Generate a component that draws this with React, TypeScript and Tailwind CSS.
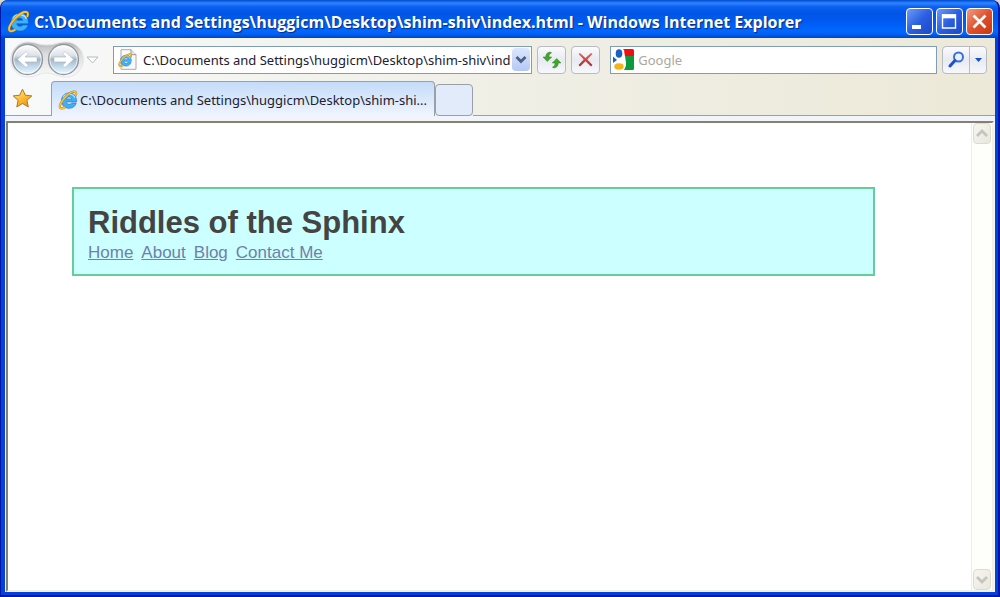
import React from 'react';

const PATH = 'C:\\Documents and Settings\\huggicm\\Desktop\\shim-shiv\\index.html';
const TAB_LABEL = 'C:\\Documents and Settings\\huggicm\\Desktop\\shim-shi...';

const links = ['Home', 'About', 'Blog', 'Contact Me'];

const App: React.FC = () => {
  return (
    <div className="h-screen flex flex-col overflow-hidden bg-[#d8d8c8] font-['Noto_Sans',sans-serif]">
      <div className="flex-1 min-h-0 flex flex-col rounded-t-lg bg-[#0540dc] border-l border-r-2 border-b-2 border-[#0018a8]">
        <TitleBar />
        <div className="flex-1 min-h-0 flex flex-col ml-1 mr-[3px] mb-[3px] bg-[#f4f5f6]">
          <div className="bg-gradient-to-r from-[#f8f9fa] via-[#f0efe6] to-[#ece9d8]">
            <Toolbar />
            <TabRow />
          </div>
          <div className="h-[5px] shrink-0 bg-[#f1f4fa]" />
          <Viewport />
        </div>
      </div>
    </div>
  );
};

const TitleBar = () => (
  <header className="h-[38px] shrink-0 flex items-center gap-1 pl-[6px] pr-[5px] pt-[5px] rounded-t-lg bg-[linear-gradient(180deg,#0048d0_0%,#2c86ff_8%,#0d5ff0_18%,#0055e5_35%,#005cf5_60%,#0068ff_82%,#0060f4_90%,#0044c0_100%)]">
    <IeLogo size={23} />
    <span className="flex-1 min-w-0 truncate font-['Open_Sans',sans-serif] text-[16px] leading-6 font-bold text-white [text-shadow:1px_1px_1px_#0a2a80]">
      {PATH} - Windows Internet Explorer
    </span>
    <div className="flex gap-[3px]">
      <button aria-label="Minimize" className="w-[27px] h-[27px] rounded border border-white bg-gradient-to-br from-[#6d9bf8] via-[#2b5ee0] to-[#1c48c8]">
        <svg viewBox="0 0 25 25" className="w-full h-full">
          <rect x="5" y="16" width="9" height="4" fill="#fff" />
        </svg>
      </button>
      <button aria-label="Maximize" className="w-[27px] h-[27px] rounded border border-white bg-gradient-to-br from-[#6d9bf8] via-[#2b5ee0] to-[#1c48c8]">
        <svg viewBox="0 0 25 25" className="w-full h-full">
          <path d="M5.500 6h13v13h-13z" fill="none" stroke="#fff" strokeWidth="1.400" />
          <path d="M5 5.300h14v4H5z" fill="#fff" />
        </svg>
      </button>
      <button aria-label="Close" className="w-[27px] h-[27px] rounded border border-white bg-gradient-to-br from-[#f09a80] via-[#e0502c] to-[#c83810]">
        <svg viewBox="0 0 25 25" className="w-full h-full">
          <path d="M6.500 6.500l12 12M18.500 6.500l-12 12" stroke="#fff" strokeWidth="2.700" />
        </svg>
      </button>
    </div>
  </header>
);

const Toolbar = () => (
  <div className="h-[43px] flex items-center pl-[5px] pr-2">
    <NavButtons />
    <div className="ml-[14px] h-7 flex-[419] min-w-0 flex items-center border border-[#7f9db9] bg-white pl-1 pr-px">
      <PageIcon />
      <input
        aria-label="Address"
        defaultValue={PATH}
        className="ml-[6px] min-w-0 flex-1 text-[13px] leading-5 text-[#202030] outline-none"
      />
      <button aria-label="Show address list" className="ml-px w-[18px] h-[23px] flex items-center justify-center rounded-sm bg-gradient-to-b from-[#dce7fd] to-[#b4c8f4]">
        <svg width="12" height="9" viewBox="0 0 12 9">
          <path d="M1.500 2L6 6.500 10.500 2" fill="none" stroke="#4a6184" strokeWidth="2.800" />
        </svg>
      </button>
    </div>
    <button aria-label="Refresh" className="ml-[5px] w-[29px] h-7 shrink-0 flex items-center justify-center rounded border border-[#b8bac4] bg-gradient-to-b from-[#fbfbfc] via-[#e8eaf2] to-[#f7f8fc]">
      <svg width="20" height="18" viewBox="0 0 20 18">
        <path d="M8.500 1C5.200 1.200 3.800 3 3.700 6H1l4.300 4.500L9.700 6H7C7 4 7.300 2.800 9.500 2z" fill="#43a52c" stroke="#28801c" strokeWidth=".5" />
        <path d="M11.500 17c3.300-.2 4.700-2 4.800-5H19l-4.300-4.500L10.300 12H13c0 2-.3 3.200-2.500 4z" fill="#43a52c" stroke="#28801c" strokeWidth=".5" />
      </svg>
    </button>
    <button aria-label="Stop" className="ml-[5px] w-[29px] h-7 shrink-0 flex items-center justify-center rounded border border-[#b8bac4] bg-gradient-to-b from-[#fbfbfc] via-[#e8eaf2] to-[#f7f8fc]">
      <svg width="15" height="15" viewBox="0 0 15 15">
        <defs>
          <linearGradient id="stop" x2="0" y2="1">
            <stop stopColor="#e8655a" />
            <stop offset="1" stopColor="#a82c30" />
          </linearGradient>
        </defs>
        <path d="M2 1l5.500 5L13 1l1.500 1-5.200 5.500 5.200 5.500-1.500 1.500L7.500 9.300 2 14.500.5 13l5.200-5.500L.5 2z" fill="url(#stop)" />
      </svg>
    </button>
    <div className="ml-[10px] h-7 flex-[328] min-w-0 flex items-center border border-[#7f9db9] bg-white pl-[2px]">
      <GoogleIcon />
      <input
        aria-label="Search"
        placeholder="Google"
        className="ml-1 min-w-0 flex-1 text-[13px] leading-5 placeholder:text-[#aca899] outline-none"
      />
    </div>
    <div className="ml-[5px] h-7 shrink-0 flex rounded border border-[#b8bac4] bg-gradient-to-b from-[#fbfbfc] via-[#e8eaf2] to-[#f7f8fc]">
      <button aria-label="Go" className="w-[27px] flex items-center justify-center border-r border-[#b8bac4]">
        <svg width="17" height="17" viewBox="0 0 17 17">
          <circle cx="10.500" cy="6" r="4.500" fill="#e8f2ff" stroke="#3b6fe0" strokeWidth="2" />
          <path d="M7 9.500L2 15" stroke="#1d4fd0" strokeWidth="3" strokeLinecap="round" />
        </svg>
      </button>
      <button aria-label="Search options" className="w-4 flex items-center justify-center">
        <svg width="7" height="4" viewBox="0 0 7 4">
          <path d="M0 0h7L3.500 4z" fill="#1250d0" />
        </svg>
      </button>
    </div>
  </div>
);

const TabRow = () => (
  <div className="h-[35px] flex items-end">
    <div className="w-[46px] h-[34px] flex items-center pl-[7px] border-b border-[#9a9fa8]">
      <button aria-label="Favorites">
        <svg width="21" height="21" viewBox="0 0 21 21">
          <defs>
            <linearGradient id="star" x1="0" y1="0" x2=".6" y2="1">
              <stop stopColor="#fff0a0" />
              <stop offset=".5" stopColor="#fcc440" />
              <stop offset="1" stopColor="#f09a18" />
            </linearGradient>
          </defs>
          <path d="M10.500 1.200l2.800 6 6.500.7-4.900 4.400 1.400 6.600-5.800-3.400-5.700 3.400 1.300-6.600L1.200 7.900l6.500-.7z" fill="url(#star)" stroke="#b87418" strokeLinejoin="round" />
        </svg>
      </button>
    </div>
    <button className="w-[384px] h-[35px] flex items-center gap-[2px] pl-[6px] pr-1 pt-[2px] rounded-t border border-b-0 border-[#9a9fa8] bg-gradient-to-b from-[#c4dbf8] to-[#eff5fe] text-left">
      <IeLogo size={20} />
      <span className="truncate text-[13px] leading-5 text-[#202030]">{TAB_LABEL}</span>
    </button>
    <button aria-label="New Tab" className="w-[38px] h-8 rounded border border-[#9a9fa8] bg-[#e1ebf9]" />
    <div className="flex-1 border-b border-[#9a9fa8]" />
  </div>
);

const Viewport = () => (
  <div className="flex-1 min-h-0 flex mx-px border-2 border-t-[#85816f] border-l-[#85816f] border-r-[#f4f1e2] border-b-[#f4f1e2] bg-white">
    <main className="flex-1 min-w-0 overflow-hidden font-['Liberation_Sans',sans-serif]">
      <section className="w-5/6 mt-16 ml-16 pt-4 px-[14px] pb-[9px] border-2 border-[#66cc99] bg-[#ccffff]">
        <h1 className="text-[31px] leading-9 font-bold text-[#444444]">Riddles of the Sphinx</h1>
        <nav className="flex gap-2 text-[17px] leading-6">
          {links.map((l) => (
            <a key={l} href="#" className="text-[#7080a8] underline">{l}</a>
          ))}
        </nav>
      </section>
    </main>
    <div className="w-[21px] flex flex-col justify-between border-l border-[#eeede5] bg-[#fefefb]">
      <ScrollButton label="Scroll up" d="M2 8l5-5 5 5" />
      <ScrollButton label="Scroll down" d="M2 3l5 5 5-5" />
    </div>
  </div>
);

const ScrollButton = ({ label, d }: { label: string; d: string }) => (
  <button aria-label={label} className="mx-px h-[21px] flex items-center justify-center rounded border border-[#dddbce] bg-gradient-to-br from-[#f6f5ef] to-[#e9e8df]">
    <svg width="14" height="11" viewBox="0 0 14 11">
      <path d={d} fill="none" stroke="#c6c5bc" strokeWidth="2.800" />
    </svg>
  </button>
);

const NavButtons = () => (
  <div className="flex items-center shrink-0">
    <div className="relative w-[74px] h-[37px]">
      <svg aria-hidden="true" className="absolute inset-0" width="74" height="37" viewBox="0 0 74 37">
        <defs>
          <linearGradient id="cradle" x2="0" y2="1">
            <stop stopColor="#b4b5b7" />
            <stop offset=".35" stopColor="#dcdddd" />
            <stop offset="1" stopColor="#fafafa" />
          </linearGradient>
          <linearGradient id="ball" x2="0" y2="1">
            <stop stopColor="#ffffff" />
            <stop offset=".36" stopColor="#dde3e8" />
            <stop offset=".5" stopColor="#a3b6c6" />
            <stop offset=".75" stopColor="#c4dcee" />
            <stop offset="1" stopColor="#eaf8ff" />
          </linearGradient>
        </defs>
        <path d="M18 1c8 0 10 3 18.500 3S48 1 56 1a17.500 17.500 0 0 1 0 35c-8 0-12-4-19.500-4S26 36 18 36A17.500 17.500 0 0 1 18 1z" fill="url(#cradle)" stroke="#e6e7e8" />
        <circle cx="17.500" cy="18.500" r="15" fill="url(#ball)" stroke="#93989d" strokeWidth="1.300" />
        <circle cx="53.500" cy="18.500" r="15" fill="url(#ball)" stroke="#93989d" strokeWidth="1.300" />
        <circle cx="17.500" cy="18.500" r="13.700" fill="none" stroke="#fff" strokeOpacity=".7" />
        <circle cx="53.500" cy="18.500" r="13.700" fill="none" stroke="#fff" strokeOpacity=".7" />
        <path d="M7.500 18.500l8.500-8 2.300 2.300-3.300 3.300h12v4.800H15l3.300 3.300-2.300 2.300z" fill="#fff" stroke="#a4b0ba" strokeWidth=".5" />
        <path d="M63.500 18.500l-8.500-8-2.300 2.300 3.300 3.300H44v4.800h12l-3.300 3.300 2.300 2.300z" fill="#fff" stroke="#a4b0ba" strokeWidth=".5" />
      </svg>
      <div className="relative flex h-full">
        <button aria-label="Back" className="flex-1 rounded-full" />
        <button aria-label="Forward" className="flex-1 rounded-full" />
      </div>
    </div>
    <button aria-label="Recent pages" className="ml-[2px] w-[13px]">
      <svg width="13" height="8" viewBox="0 0 13 8">
        <path d="M1 1h11L6.500 7z" fill="#fff" stroke="#b8babc" />
      </svg>
    </button>
  </div>
);

// blue "e" with the gold ring crossing it
const LogoShape = () => (
  <>
    <path d="M22.300 14.300H10.200c.2 1.700 1.600 2.700 3.400 2.700 1.400 0 2.400-.5 2.900-1.400h5.400c-1.200 4.200-4.300 6.400-8.500 6.400-5.600 0-9.300-3.600-9.300-9.100 0-5.600 3.800-9.400 9.400-9.400 5.700 0 9.100 3.900 8.800 10.800zM10.200 10.700h6.200c-.3-1.500-1.400-2.300-3-2.300-1.700 0-2.800.8-3.200 2.300z" fill="#3fb0f6" stroke="#1263b4" strokeWidth=".6" />
    <path d="M6.300 9c1-2.500 3.500-4 6.800-4 3.600 0 6.100 1.500 7.100 4.200" fill="none" stroke="#a9e2ff" strokeWidth="1.500" />
    <path d="M21.300 6.500c.8-2.300.6-3.800-.7-4.300-2.400-.9-7.600 1.800-12.200 6.700C3.300 14.300.9 19.800 2.800 21.600c1 .9 3 .5 5.400-.8" fill="none" stroke="#b47b10" strokeWidth="2.600" strokeLinecap="round" />
    <path d="M21.300 6.500c.8-2.300.6-3.800-.7-4.300-2.400-.9-7.600 1.800-12.200 6.700C3.300 14.300.9 19.800 2.800 21.600c1 .9 3 .5 5.400-.8" fill="none" stroke="#fdc73a" strokeWidth="1.700" strokeLinecap="round" />
  </>
);

const IeLogo = ({ size }: { size: number }) => (
  <svg width={size} height={size} viewBox="0 0 24 24" className="shrink-0" aria-hidden="true">
    <LogoShape />
  </svg>
);

const PageIcon = () => (
  <svg width="19" height="21" viewBox="0 0 19 21" className="shrink-0" aria-hidden="true">
    <path d="M3 .7h10l5 5v14.600H3z" fill="#fafafa" stroke="#aaa" />
    <path d="M13 .7v5h5" fill="#e4e4e4" stroke="#999" />
    <g transform="translate(0 4) scale(.6)">
      <LogoShape />
    </g>
  </svg>
);

const GoogleIcon = () => (
  <svg width="21" height="21" viewBox="0 0 21 21" className="shrink-0" aria-hidden="true">
    <path d="M10 0h9.500a1.500 1.500 0 0 1 1.500 1.500V7h-9z" fill="#f20d10" />
    <path d="M12 7h9v12.500a1.500 1.500 0 0 1-1.500 1.500H11l2-7z" fill="#0d9a3c" />
    <path d="M0 7.500l4 3.500-4 3z" fill="#1c5fc4" />
    <path d="M11 0c.6 5 .8 6.500-1.500 9 4 3 5 8 1 12H8L6 11l3-8z" fill="#fff" />
    <ellipse cx="6" cy="4.500" rx="3.300" ry="4.300" fill="#1c5fc4" />
    <ellipse cx="6" cy="17.500" rx="4.700" ry="3.200" fill="#f2b31b" />
  </svg>
);

export default App;
